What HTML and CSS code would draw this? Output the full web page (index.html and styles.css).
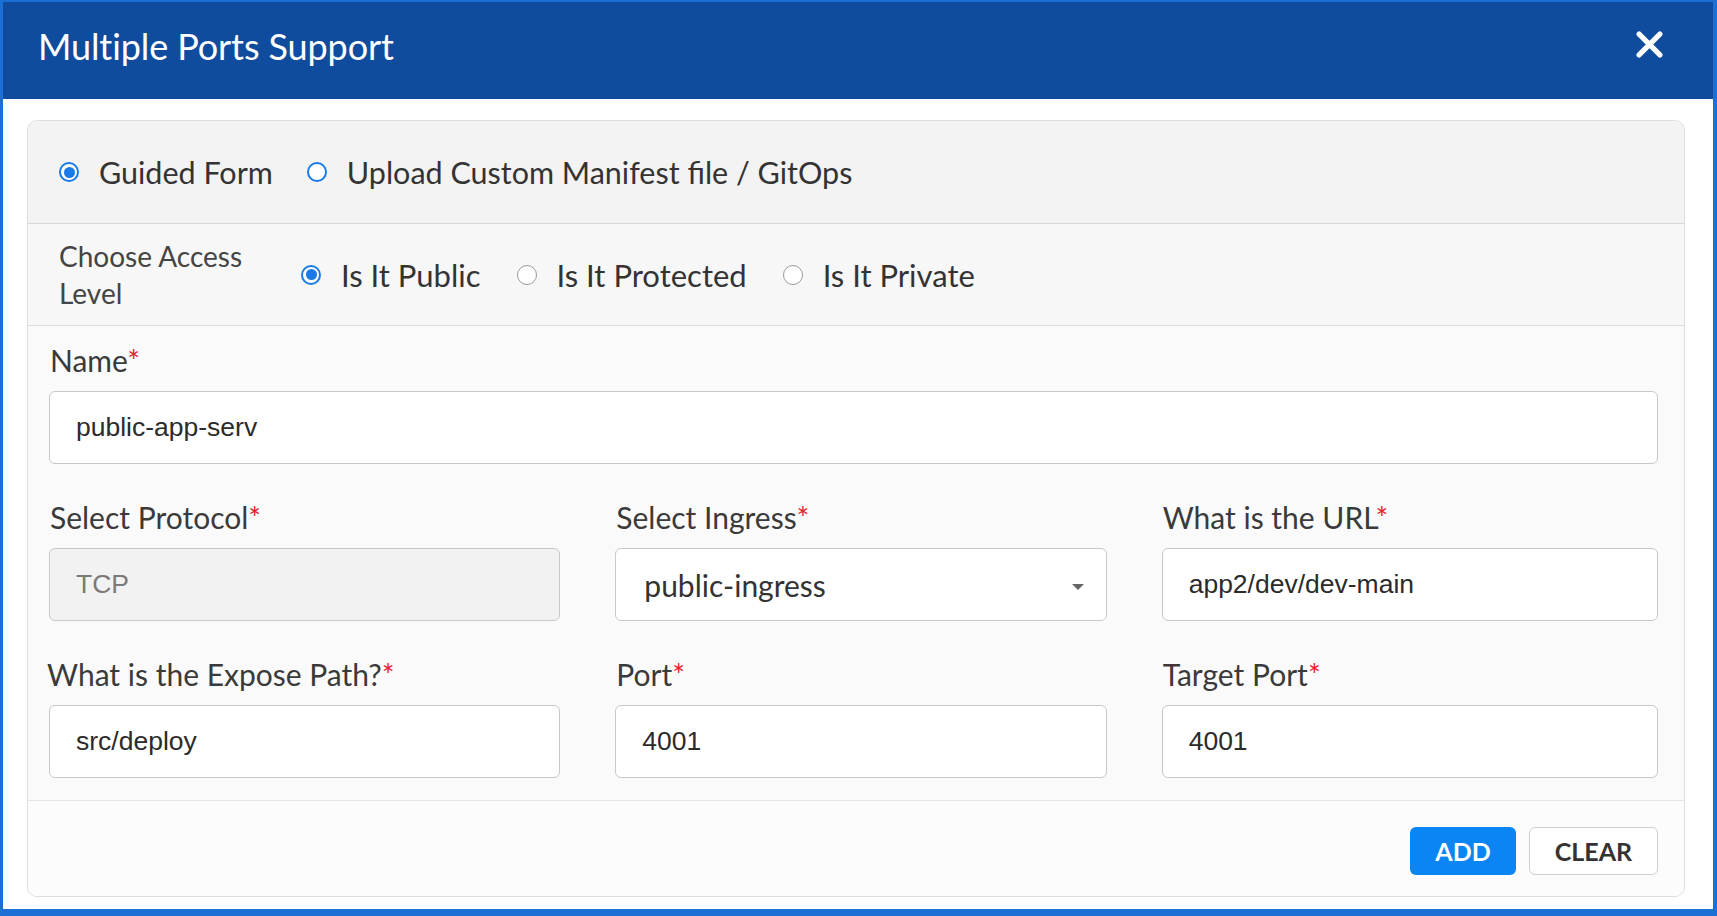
FILE: index.html
```html
<!DOCTYPE html>
<html lang="en">
<head>
    <meta charset="UTF-8">
    <meta name="viewport" content="width=device-width, initial-scale=1.0">
    <title>Multiple Ports Support</title>
    <link rel="stylesheet" href="styles.css">
</head>
<body>

    <div class="modal">
        <!-- Header -->
        <div class="modal-header">
            <h1>Multiple Ports Support</h1>
            <button class="close-btn" aria-label="Close">
                <svg width="27" height="27" viewBox="0 0 26 26">
                    <path d="M3 3 L23 23 M23 3 L3 23" stroke="#fff" stroke-width="5" stroke-linecap="round"/>
                </svg>
            </button>
        </div>

        <div class="modal-body">
            <div class="card">
                <!-- Mode -->
                <div class="mode-row">
                    <label class="radio-item"><input type="radio" name="mode" class="radio-blue" checked> Guided Form</label>
                    <label class="radio-item"><input type="radio" name="mode" class="radio-blue"> Upload Custom Manifest file / GitOps</label>
                </div>

                <!-- Access level -->
                <div class="access-row">
                    <div class="access-label">Choose Access Level</div>
                    <label class="radio-item"><input type="radio" name="access" checked> Is It Public</label>
                    <label class="radio-item"><input type="radio" name="access"> Is It Protected</label>
                    <label class="radio-item"><input type="radio" name="access"> Is It Private</label>
                </div>

                <!-- Fields -->
                <div class="form-section">
                    <div class="field">
                        <label for="name">Name<span class="req">*</span></label>
                        <input type="text" id="name" value="public-app-serv">
                    </div>

                    <div class="field-grid">
                        <div class="field">
                            <label for="protocol">Select Protocol<span class="req">*</span></label>
                            <input type="text" id="protocol" value="TCP" disabled>
                        </div>
                        <div class="field">
                            <label for="ingress">Select Ingress<span class="req">*</span></label>
                            <div class="select-box" id="ingress">
                                <span>public-ingress</span>
                                <span class="caret"></span>
                            </div>
                        </div>
                        <div class="field">
                            <label for="url">What is the URL<span class="req">*</span></label>
                            <input type="text" id="url" value="app2/dev/dev-main">
                        </div>

                        <div class="field">
                            <label for="path" class="shift">What is the Expose Path?<span class="req">*</span></label>
                            <input type="text" id="path" value="src/deploy">
                        </div>
                        <div class="field">
                            <label for="port">Port<span class="req">*</span></label>
                            <input type="text" id="port" value="4001">
                        </div>
                        <div class="field">
                            <label for="target">Target Port<span class="req">*</span></label>
                            <input type="text" id="target" value="4001">
                        </div>
                    </div>
                </div>

                <!-- Footer -->
                <div class="card-footer">
                    <button class="btn btn-primary">ADD</button>
                    <button class="btn btn-default">CLEAR</button>
                </div>
            </div>
        </div>
    </div>

</body>
</html>
```

FILE: styles.css
```css
body {
    margin: 0;
    font-family: Lato, "Open Sans", sans-serif;
    background-color: #fff;
}

.modal {
    height: 916px;
    box-sizing: border-box;
    border-style: solid;
    border-color: #1c6fd4;
    border-width: 2px 4px 7px 3px;
    display: flex;
    flex-direction: column;
    background-color: #fff;
}

.modal-header {
    height: 97px;
    box-sizing: border-box;
    background-color: #104c9e;
    display: flex;
    align-items: center;
    justify-content: space-between;
    padding: 0 50px 10px 35px;
    flex-shrink: 0;
}

.modal-header h1 {
    margin: 0;
    color: #fff;
    font-size: 36px;
    font-weight: 400;
    letter-spacing: -0.1px;
}

.close-btn {
    background: none;
    border: none;
    padding: 0;
    margin-top: -2px;
    cursor: pointer;
    display: flex;
}

.modal-body {
    flex: 1;
    padding: 21px 28px 12px 24px;
    display: flex;
}

.card {
    flex: 1;
    border: 1px solid #dedede;
    border-radius: 10px;
    overflow: hidden;
    display: flex;
    flex-direction: column;
    background-color: #fcfcfc;
}

/* radio rows */
.mode-row {
    height: 102px;
    background-color: #f3f3f3;
    border-bottom: 1px solid #d8d8d8;
    display: flex;
    align-items: center;
    gap: 34px;
    padding-left: 31px;
    font-size: 30.5px;
    color: #333;
}

.access-row {
    height: 101px;
    background-color: #f7f7f7;
    border-bottom: 1px solid #dcdcdc;
    display: flex;
    align-items: center;
    gap: 36px;
    padding-left: 31px;
    font-size: 31px;
    color: #333;
}

.access-label {
    width: 205px;
    font-size: 28px;
    line-height: 37px;
    color: #444;
    margin-right: 1px;
}

.radio-item {
    display: flex;
    align-items: center;
    gap: 20px;
    cursor: pointer;
}

input[type="radio"] {
    appearance: none;
    -webkit-appearance: none;
    margin: 0;
    width: 20px;
    height: 20px;
    border-radius: 50%;
    border: 1.5px solid #999;
    background-color: #fff;
    display: grid;
    place-items: center;
    flex-shrink: 0;
}

input[type="radio"].radio-blue {
    border: 2px solid #1a7ae8;
}

input[type="radio"]:checked {
    border: 2px solid #1a7ae8;
}

input[type="radio"]:checked::after {
    content: "";
    width: 11px;
    height: 11px;
    border-radius: 50%;
    background-color: #1a7ae8;
}

/* form */
.form-section {
    background-color: #fafafa;
    padding: 17px 26px 22px 21px;
    border-bottom: 1px solid #e6e6e6;
}

.field label {
    display: block;
    font-size: 30px;
    line-height: 35px;
    color: #3a3a3a;
    margin-bottom: 13px;
    margin-left: 1px;
}

.field label.shift {
    margin-left: -2px;
}

.req {
    color: #e4222a;
}

.field input[type="text"], .select-box {
    width: 100%;
    height: 73px;
    box-sizing: border-box;
    border: 1px solid #c8c8c8;
    border-radius: 6px;
    background-color: #fff;
    padding: 0 26px;
    font-family: "Liberation Sans", Arial, sans-serif;
    font-size: 26.5px;
    color: #2b2b2b;
}

.field input[type="text"]:disabled {
    background-color: #f2f2f2;
    color: #7a7a7a;
}

.select-box {
    display: flex;
    align-items: center;
    justify-content: space-between;
    padding: 0 22px 0 28px;
    font-family: Lato, "Open Sans", sans-serif;
    font-size: 30px;
    color: #333;
}

.caret {
    width: 0;
    height: 0;
    border-left: 6px solid transparent;
    border-right: 6px solid transparent;
    border-top: 6px solid #666;
    margin-top: 4px;
}

.field-grid {
    display: grid;
    grid-template-columns: 511fr 491fr 496fr;
    column-gap: 55px;
    row-gap: 36px;
    margin-top: 36px;
}

/* footer */
.card-footer {
    flex: 1;
    display: flex;
    align-items: center;
    justify-content: flex-end;
    gap: 13px;
    padding-right: 26px;
    background-color: #fcfcfc;
}

.btn {
    height: 48px;
    border-radius: 6px;
    font-family: Lato, "Open Sans", sans-serif;
    font-size: 25px;
    font-weight: 700;
    cursor: pointer;
    margin-top: 4px;
}

.btn-primary {
    width: 106px;
    background-color: #0b84f4;
    color: #fff;
    border: none;
}

.btn-default {
    width: 129px;
    background-color: #fff;
    color: #333;
    border: 1px solid #cfcfcf;
}
```
